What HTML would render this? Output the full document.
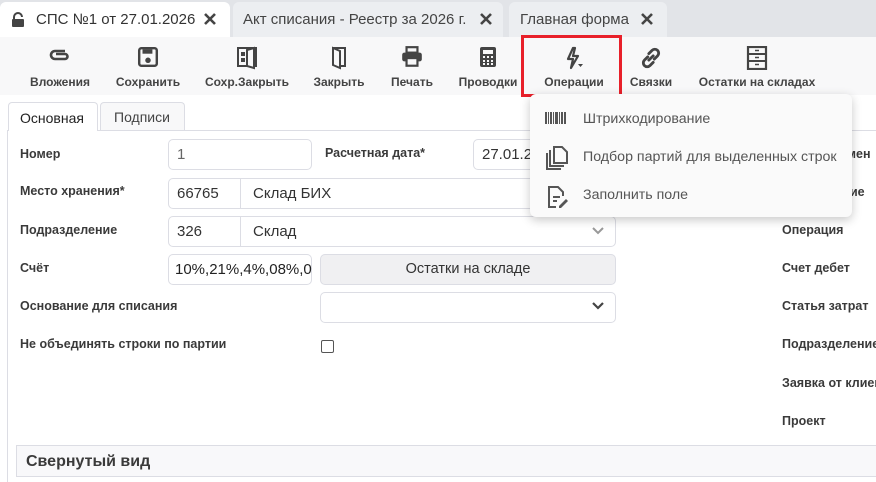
<!DOCTYPE html><html><head><meta charset="utf-8"><style>
*{box-sizing:border-box;margin:0;padding:0}
body{width:876px;height:482px;overflow:hidden;background:#fff;font-family:"Liberation Sans","DejaVu Sans",sans-serif;position:relative;color:#333}
.a{position:absolute}
.tabbar{left:0;top:0;width:876px;height:37px;background:#e2e4e8}
.tab{top:2px;height:35px;background:#eceef1;border-radius:6px 6px 0 0;font-size:15px;color:#444;padding-top:9px}
.tb{top:37px;left:0;width:876px;height:58px;background:#f8f8f9}
.ti{top:75px;font-size:12px;font-weight:bold;color:#444;transform:translateX(-50%);white-space:nowrap}
.ic{top:46px;transform:translateX(-50%)}
.lbl{font-size:12.5px;font-weight:bold;color:#3a3a3a;white-space:nowrap}
.inp{border:1px solid #dcdde4;border-radius:5px;background:#fff;font-size:15px;color:#333;padding:6px 8px;height:31px}
.mi{left:583px;font-size:14.2px;color:#555}
</style></head><body>
<div class="a tabbar"></div>
<div class="a tab" style="left:0;width:230px;background:#fff;padding-left:36px;color:#333">СПС №1 от 27.01.2026</div>
<svg class="a" style="left:11px;top:12px" width="14" height="16" viewBox="0 0 14 16"><path d="M3 7V5a4 4 0 0 1 8 0" fill="none" stroke="#444" stroke-width="2"/><rect x="1" y="7" width="12" height="8" rx="1" fill="#444"/></svg>
<svg class="a" style="left:204px;top:13px" width="12" height="12" viewBox="0 0 12 12"><path d="M1 1l10 10M11 1L1 11" stroke="#444" stroke-width="2.6"/></svg>
<div class="a tab" style="left:233px;width:270px;padding-left:10px">Акт списания - Реестр за 2026 г.</div>
<svg class="a" style="left:480px;top:13px" width="12" height="12" viewBox="0 0 12 12"><path d="M1 1l10 10M11 1L1 11" stroke="#444" stroke-width="2.6"/></svg>
<div class="a tab" style="left:509px;width:158px;padding-left:11px">Главная форма</div>
<svg class="a" style="left:641px;top:13px" width="12" height="12" viewBox="0 0 12 12"><path d="M1 1l10 10M11 1L1 11" stroke="#444" stroke-width="2.6"/></svg>
<div class="a tb"></div>
<svg class="a ic" style="left:60px" width="22" height="20" viewBox="0 0 22 20"><path d="M16 5H6a4 4 0 0 0 0 8h10a2.5 2.5 0 0 0 0-5H7" fill="none" stroke="#444" stroke-width="2.6"/></svg>
<svg class="a ic" style="left:148px" width="22" height="22" viewBox="0 0 20 20"><rect x="2" y="2" width="16" height="16" rx="2" fill="none" stroke="#444" stroke-width="2.2"/><rect x="5" y="3" width="9" height="4" fill="#444"/><circle cx="10" cy="13" r="2.5" fill="#444"/></svg>
<svg class="a ic" style="left:247px" width="22" height="24" viewBox="0 0 22 24"><rect x="2" y="2" width="18" height="18" fill="none" stroke="#444" stroke-width="2"/><path d="M11 4l7-2v20l-7-2z" fill="#f8f8f9" stroke="#444" stroke-width="2"/><rect x="5" y="6" width="4" height="4" fill="#444"/><rect x="5" y="12" width="4" height="4" fill="#444"/></svg>
<svg class="a ic" style="left:339px" width="18" height="24" viewBox="0 0 18 24"><path d="M3 2h12v18H9M3 2l7 3v17l-7-3z" fill="none" stroke="#444" stroke-width="2"/></svg>
<svg class="a ic" style="left:412px" width="24" height="22" viewBox="0 0 22 20"><rect x="6" y="1" width="10" height="5" fill="none" stroke="#444" stroke-width="2"/><rect x="2" y="6" width="18" height="8" rx="2" fill="#444"/><rect x="6" y="11" width="10" height="7" fill="#f8f8f9" stroke="#444" stroke-width="2"/></svg>
<svg class="a ic" style="left:488px" width="18" height="22" viewBox="0 0 18 22"><rect x="1" y="1" width="16" height="20" rx="2" fill="#444"/><rect x="4" y="4" width="10" height="4" fill="#f8f8f9"/><g fill="#f8f8f9"><rect x="4" y="10" width="2" height="2"/><rect x="8" y="10" width="2" height="2"/><rect x="12" y="10" width="2" height="2"/><rect x="4" y="14" width="2" height="2"/><rect x="8" y="14" width="2" height="2"/><rect x="12" y="14" width="2" height="2"/><rect x="4" y="17" width="2" height="2"/><rect x="8" y="17" width="2" height="2"/><rect x="12" y="17" width="2" height="2"/></g></svg>
<svg class="a ic" style="left:574px" width="20" height="24" viewBox="0 0 20 24"><path d="M9 2L4 13h5l-2 9 7-12H9l2-8z" fill="none" stroke="#444" stroke-width="2.2" stroke-linejoin="round"/><path d="M14 18h5l-2.5 3z" fill="#444"/></svg>
<svg class="a ic" style="left:651px" width="24" height="24" viewBox="0 0 22 22"><path d="M9 13l4-4M8 10l-3 3a3.5 3.5 0 0 0 5 5l3-3M14 12l3-3a3.5 3.5 0 0 0-5-5l-3 3" fill="none" stroke="#444" stroke-width="2.6" stroke-linecap="round"/></svg>
<svg class="a ic" style="left:757px" width="22" height="24" viewBox="0 0 22 24"><rect x="2" y="1" width="18" height="22" fill="none" stroke="#444" stroke-width="2.2"/><path d="M2 8h18M2 15h18" stroke="#444" stroke-width="2"/><path d="M9 4.5h4M9 11.5h4M9 18.5h4" stroke="#444" stroke-width="1.5"/></svg>
<div class="a ti" style="left:60px">Вложения</div>
<div class="a ti" style="left:148px">Сохранить</div>
<div class="a ti" style="left:247px">Сохр.Закрыть</div>
<div class="a ti" style="left:339px">Закрыть</div>
<div class="a ti" style="left:412px">Печать</div>
<div class="a ti" style="left:488px">Проводки</div>
<div class="a ti" style="left:574px">Операции</div>
<div class="a ti" style="left:651px">Связки</div>
<div class="a ti" style="left:757px">Остатки на складах</div>
<div class="a" style="left:521px;top:35px;width:101px;height:62px;border:3px solid #e8202a"></div>
<div class="a" style="left:7px;top:130px;width:1px;height:352px;background:#dcdde4"></div>
<div class="a" style="left:7px;top:130px;width:869px;height:1px;background:#dcdde4"></div>
<div class="a" style="left:8px;top:102px;width:90px;height:29px;background:#fff;border:1px solid #dcdde4;border-bottom:none;border-radius:4px 4px 0 0;font-size:14px;color:#222;padding:7px 0 0 11px">Основная</div>
<div class="a" style="left:100px;top:102px;width:85px;height:28px;background:#f8f8f9;border:1px solid #dcdde4;border-bottom:none;border-radius:4px 4px 0 0;font-size:14px;color:#444;padding:6px 0 0 13px">Подписи</div>
<div class="a lbl" style="left:20px;top:147px">Номер</div>
<div class="a inp" style="left:168px;top:139px;width:144px;color:#666">1</div>
<div class="a lbl" style="left:325px;top:146px">Расчетная дата*</div>
<div class="a inp" style="left:473px;top:139px;width:100px">27.01.2026</div>
<div class="a lbl" style="left:20px;top:184px">Место хранения*</div>
<div class="a inp" style="left:168px;top:178px;width:73px;border-radius:5px 0 0 5px">66765</div>
<div class="a inp" style="left:240px;top:178px;width:376px;border-radius:0 5px 5px 0;padding-left:12px">Склад БИХ</div>
<div class="a lbl" style="left:20px;top:223px">Подразделение</div>
<div class="a inp" style="left:168px;top:216px;width:73px;border-radius:5px 0 0 5px">326</div>
<div class="a inp" style="left:240px;top:216px;width:376px;border-radius:0 5px 5px 0;padding-left:12px">Склад</div>
<svg class="a" style="left:592px;top:227px" width="12" height="8" viewBox="0 0 12 8"><path d="M1 1l5 5 5-5" fill="none" stroke="#999" stroke-width="2"/></svg>
<div class="a lbl" style="left:20px;top:261px">Счёт</div>
<div class="a inp" style="left:168px;top:254px;width:144px;padding-left:6px;color:#222">10%,21%,4%,08%,0</div>
<div class="a" style="left:320px;top:254px;width:296px;height:31px;background:#f0f0f2;border:1px solid #dcdde4;border-radius:5px;font-size:14.5px;color:#333;text-align:center;padding-top:6px">Остатки на складе</div>
<div class="a lbl" style="left:20px;top:299px">Основание для списания</div>
<div class="a inp" style="left:320px;top:292px;width:296px"></div>
<svg class="a" style="left:592px;top:302px" width="12" height="8" viewBox="0 0 12 8"><path d="M1 1l5 5 5-5" fill="none" stroke="#444" stroke-width="2.2"/></svg>
<div class="a lbl" style="left:20px;top:337px">Не объединять строки по партии</div>
<div class="a" style="left:321px;top:340px;width:13px;height:13px;border:1.3px solid #555;border-radius:2px"></div>
<div class="a lbl" style="left:840px;top:147px">умен</div>
<div class="a lbl" style="left:850px;top:185px">ие</div>
<div class="a lbl" style="left:782px;top:223px">Операция</div>
<div class="a lbl" style="left:782px;top:261px">Счет дебет</div>
<div class="a lbl" style="left:782px;top:299px">Статья затрат</div>
<div class="a lbl" style="left:782px;top:337px">Подразделение</div>
<div class="a lbl" style="left:782px;top:376px">Заявка от клиента</div>
<div class="a lbl" style="left:782px;top:414px">Проект</div>
<div class="a" style="left:16px;top:445px;width:870px;height:32px;background:#f8f8fa;border:1px solid #dcdde4;font-size:16px;font-weight:bold;color:#3a3a3a;padding:7px 0 0 9px">Свернутый вид</div>
<div class="a" style="left:530px;top:94px;width:322px;height:123px;background:#fafafa;border-radius:6px;box-shadow:0 3px 10px rgba(0,0,0,.22)"></div>
<svg class="a" style="left:545px;top:112px" width="22" height="12" viewBox="0 0 22 12"><g fill="#555"><rect x="0" y="0" width="2" height="12"/><rect x="3" y="0" width="1" height="12"/><rect x="5" y="0" width="2" height="12"/><rect x="8" y="0" width="1" height="12"/><rect x="10" y="0" width="3" height="12"/><rect x="14" y="0" width="1" height="12"/><rect x="16" y="0" width="2" height="12"/><rect x="19" y="0" width="2" height="12"/></g></svg>
<div class="a mi" style="top:111px">Штрихкодирование</div>
<svg class="a" style="left:545px;top:145px" width="24" height="26" viewBox="0 0 24 26"><path d="M2 8v16h14M5 5v16h14" fill="none" stroke="#555" stroke-width="2"/><path d="M9 2h8l5 5v11H9z" fill="#fafafa" stroke="#555" stroke-width="2"/></svg>
<div class="a mi" style="top:149px">Подбор партий для выделенных строк</div>
<svg class="a" style="left:546px;top:185px" width="22" height="24" viewBox="0 0 22 24"><path d="M10 22H3V2h9l5 5v4" fill="none" stroke="#555" stroke-width="2"/><path d="M7 12h7M7 16h4" stroke="#555" stroke-width="2"/><path d="M13 21l7-7 2 2-7 7h-2z" fill="#555"/></svg>
<div class="a mi" style="top:187px">Заполнить поле</div>
</body></html>
